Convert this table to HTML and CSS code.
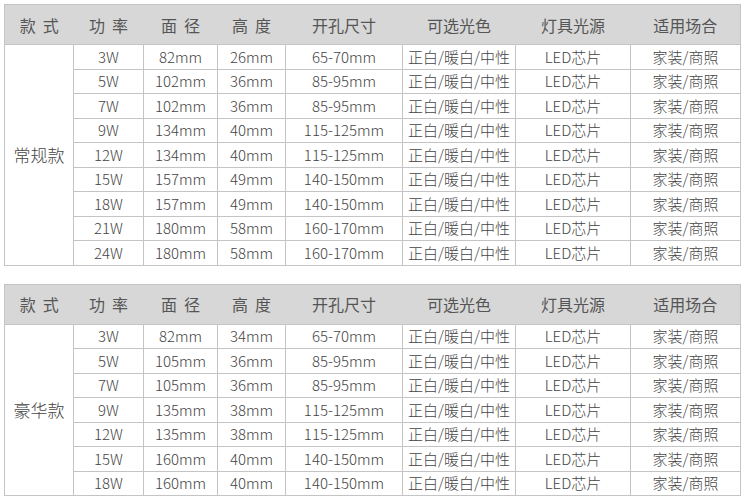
FILE: index.html
```html
<!DOCTYPE html>
<html lang="zh">
<head>
<meta charset="utf-8">
<link rel="stylesheet" href="styles.css">
</head>
<body>
<div class="page">
<table class="spec">
  <colgroup>
    <col class="c1"><col class="c2"><col class="c3"><col class="c4"><col class="c5"><col class="c6"><col class="c7"><col class="c8">
  </colgroup>
  <thead>
    <tr><th class="wide">款式</th><th class="wide">功率</th><th class="wide">面径</th><th class="wide">高度</th><th>开孔尺寸</th><th>可选光色</th><th>灯具光源</th><th>适用场合</th></tr>
  </thead>
  <tbody>
    <tr><td class="kind" rowspan="9">常规款</td><td>3W</td><td>82mm</td><td>26mm</td><td>65-70mm</td><td>正白/暖白/中性</td><td>LED芯片</td><td>家装/商照</td></tr>
    <tr><td>5W</td><td>102mm</td><td>36mm</td><td>85-95mm</td><td>正白/暖白/中性</td><td>LED芯片</td><td>家装/商照</td></tr>
    <tr><td>7W</td><td>102mm</td><td>36mm</td><td>85-95mm</td><td>正白/暖白/中性</td><td>LED芯片</td><td>家装/商照</td></tr>
    <tr><td>9W</td><td>134mm</td><td>40mm</td><td>115-125mm</td><td>正白/暖白/中性</td><td>LED芯片</td><td>家装/商照</td></tr>
    <tr><td>12W</td><td>134mm</td><td>40mm</td><td>115-125mm</td><td>正白/暖白/中性</td><td>LED芯片</td><td>家装/商照</td></tr>
    <tr><td>15W</td><td>157mm</td><td>49mm</td><td>140-150mm</td><td>正白/暖白/中性</td><td>LED芯片</td><td>家装/商照</td></tr>
    <tr><td>18W</td><td>157mm</td><td>49mm</td><td>140-150mm</td><td>正白/暖白/中性</td><td>LED芯片</td><td>家装/商照</td></tr>
    <tr><td>21W</td><td>180mm</td><td>58mm</td><td>160-170mm</td><td>正白/暖白/中性</td><td>LED芯片</td><td>家装/商照</td></tr>
    <tr><td>24W</td><td>180mm</td><td>58mm</td><td>160-170mm</td><td>正白/暖白/中性</td><td>LED芯片</td><td>家装/商照</td></tr>
  </tbody>
</table>

<table class="spec">
  <colgroup>
    <col class="c1"><col class="c2"><col class="c3"><col class="c4"><col class="c5"><col class="c6"><col class="c7"><col class="c8">
  </colgroup>
  <thead>
    <tr><th class="wide">款式</th><th class="wide">功率</th><th class="wide">面径</th><th class="wide">高度</th><th>开孔尺寸</th><th>可选光色</th><th>灯具光源</th><th>适用场合</th></tr>
  </thead>
  <tbody>
    <tr><td class="kind" rowspan="7">豪华款</td><td>3W</td><td>82mm</td><td>34mm</td><td>65-70mm</td><td>正白/暖白/中性</td><td>LED芯片</td><td>家装/商照</td></tr>
    <tr><td>5W</td><td>105mm</td><td>36mm</td><td>85-95mm</td><td>正白/暖白/中性</td><td>LED芯片</td><td>家装/商照</td></tr>
    <tr><td>7W</td><td>105mm</td><td>36mm</td><td>85-95mm</td><td>正白/暖白/中性</td><td>LED芯片</td><td>家装/商照</td></tr>
    <tr><td>9W</td><td>135mm</td><td>38mm</td><td>115-125mm</td><td>正白/暖白/中性</td><td>LED芯片</td><td>家装/商照</td></tr>
    <tr><td>12W</td><td>135mm</td><td>38mm</td><td>115-125mm</td><td>正白/暖白/中性</td><td>LED芯片</td><td>家装/商照</td></tr>
    <tr><td>15W</td><td>160mm</td><td>40mm</td><td>140-150mm</td><td>正白/暖白/中性</td><td>LED芯片</td><td>家装/商照</td></tr>
    <tr><td>18W</td><td>160mm</td><td>40mm</td><td>140-150mm</td><td>正白/暖白/中性</td><td>LED芯片</td><td>家装/商照</td></tr>
  </tbody>
</table>
</div>
</body>
</html>
```

FILE: styles.css
```css
html, body {
  margin: 0;
  padding: 0;
  background: #ffffff;
}

.page {
  padding: 4px 0 0 4px;
  display: flex;
  flex-direction: column;
  gap: 18px;
}

.spec {
  width: 737px;
  border-collapse: collapse;
  table-layout: fixed;
  font-family: "Noto Sans CJK SC", "Noto Sans", sans-serif;
  font-weight: 300;
  color: #444444;
}

.c1 { width: 69px; }
.c2 { width: 70px; }
.c3 { width: 74px; }
.c4 { width: 68px; }
.c5 { width: 117px; }
.c6 { width: 113px; }
.c7 { width: 115px; }
.c8 { width: 110px; }

.spec th {
  height: 39px;
  padding: 0;
  background: #d7d7d7;
  font-size: 16px;
  font-weight: 400;
  color: #555555;
  text-align: center;
  border-top: 1px solid #c4c4c4;
  border-bottom: 1px solid #c4c4c4;
}

.spec th.wide {
  letter-spacing: 7px;
  padding-left: 7px;
}

.spec th:first-child { border-left: 1px solid #c4c4c4; }
.spec th:last-child { border-right: 1px solid #c4c4c4; }

.spec td {
  height: 23.5px;
  padding: 0;
  font-size: 15px;
  line-height: 18px;
  text-align: center;
  border: 1px solid #c4c4c4;
  white-space: nowrap;
}

.spec td.kind {
  font-size: 17px;
}
```
